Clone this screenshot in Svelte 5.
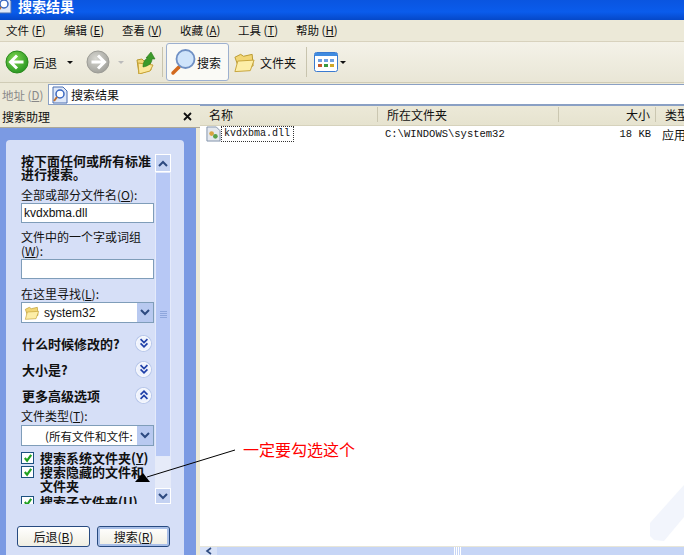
<script>
  const menus = [['文件','F'],['编辑','E'],['查看','V'],['收藏','A'],['工具','T'],['帮助','H']];
  const cjk = '"Noto Sans CJK SC", "DejaVu Sans", sans-serif';
</script>

{#snippet chevron(up)}
  <span class="chev">
    <svg width="12" height="12" viewBox="0 0 14 14" fill="none" stroke="#1f3fa8" stroke-width="2">
      {#if up}
        <path d="M3 6.500 7 2.500l4 4M3 11.500l4-4 4 4"/>
      {:else}
        <path d="M3 2.500 7 6.500l4-4M3 7.500l4 4 4-4"/>
      {/if}
    </svg>
  </span>
{/snippet}

{#snippet folder(w, h)}
  <svg width={w} height={h} viewBox="0 0 24 21">
    <path d="M2 5l6-3 3 2 9-2 1 12-14 5z" fill="#f2d675" stroke="#b99a30"/>
    <path d="M5 9l17-1-4 11-16 1z" fill="#fdeea8" stroke="#c6a338"/>
  </svg>
{/snippet}

{#snippet docIcon()}
  <svg width="16" height="18" viewBox="0 0 16 18">
    <path d="M1 1h10l4 4v12H1z" fill="#dfe8f8" stroke="#4a6fb0"/>
    <circle cx="8" cy="8" r="4" fill="#fff" stroke="#3a67c0" stroke-width="1.500"/>
    <path d="M5 11l-3 4" stroke="#c07030" stroke-width="2"/>
  </svg>
{/snippet}

{#snippet drop()}
  <span class="drop">
    <svg width="10" height="7" viewBox="0 0 10 7" fill="none" stroke="#2d4a80" stroke-width="2"><path d="M1 1l4 4 4-4"/></svg>
  </span>
{/snippet}

{#snippet check()}
  <span class="cb">
    <svg width="10" height="10" viewBox="0 0 11 11" fill="none" stroke="#21a121" stroke-width="2.400"><path d="M2 5.500 4.500 8.500 9 2"/></svg>
  </span>
{/snippet}

<div class="win" style:font-family={cjk}>
  <header class="title">
    <span class="title-ico">{@render docIcon()}</span>
    <span class="title-txt">搜索结果</span>
  </header>

  <nav class="menu">
    {#each menus as [t, k]}
      <span>{t} (<u>{k}</u>)</span>
    {/each}
  </nav>

  <div class="tools">
    <div class="tool back">
      <svg width="24" height="24" viewBox="0 0 24 24">
        <defs>
          <radialGradient id="g1" cx=".4" cy=".35" r=".75"><stop offset="0" stop-color="#7fd64f"/><stop offset="1" stop-color="#1f8f1e"/></radialGradient>
          <radialGradient id="g2" cx=".4" cy=".35" r=".75"><stop offset="0" stop-color="#d8d8d2"/><stop offset="1" stop-color="#9a9a94"/></radialGradient>
        </defs>
        <circle cx="12" cy="12" r="11" fill="url(#g1)" stroke="#2a8a1c"/>
        <path d="M12 5.500 5.500 12l6.500 6.500M6 12h12.500" fill="none" stroke="#fff" stroke-width="3"/>
      </svg>
      <span>后退</span>
      <i class="caret"></i>
    </div>
    <div class="tool fwd">
      <svg width="24" height="24" viewBox="0 0 24 24">
        <circle cx="12" cy="12" r="11" fill="url(#g2)" stroke="#9c9c96"/>
        <path d="M12 5.500 18.500 12 12 18.500M18 12H5.500" fill="none" stroke="#fff" stroke-width="3"/>
      </svg>
      <i class="caret off"></i>
    </div>
    <div class="tool up">
      <svg width="20" height="23" viewBox="0 0 20 23">
        <path d="M1 9l5-1 2 2 6-1 1 10-12 4z" fill="#f2d675" stroke="#b99a30"/>
        <path d="M2 12l15 2-3 6-11 3z" fill="#fce79a" stroke="#c6a338"/>
        <path d="M7 16c0-5 2-8 5-9h-2l5-6 4 7h-3c0 4-3 7-9 8z" fill="#3c9a2a" stroke="#2a7a1c" stroke-width=".6"/>
      </svg>
    </div>
    <span class="sep"></span>
    <div class="tool search">
      <svg width="27" height="28" viewBox="0 0 27 28">
        <path d="M3 25l6-6" stroke="#d2691e" stroke-width="3.500" stroke-linecap="round"/>
        <circle cx="15.500" cy="11" r="9" fill="#cfe4fb" stroke="#6f90c4" stroke-width="1.800"/>
      </svg>
      <span>搜索</span>
    </div>
    <div class="tool folders">
      {@render folder(23, 21)}
      <span>文件夹</span>
    </div>
    <span class="sep two"></span>
    <div class="tool views">
      <svg width="24" height="20" viewBox="0 0 24 20">
        <rect x=".5" y=".5" width="23" height="19" rx="2" fill="#fff" stroke="#3a7ad0"/>
        <rect x="1" y="1" width="22" height="3" fill="#3f8be0"/>
        <g fill="#c85a2a"><rect x="4" y="12" width="4" height="3"/></g>
        <g fill="#6fa0e0"><rect x="4" y="7" width="4" height="3"/><rect x="10" y="7" width="4" height="3"/><rect x="16" y="7" width="4" height="3"/></g>
        <g fill="#3a9a40"><rect x="10" y="12" width="4" height="3"/></g>
        <rect x="16" y="12" width="4" height="3" fill="#d0a828"/>
      </svg>
      <i class="caret"></i>
    </div>
  </div>

  <div class="addr">
    <span class="addr-label">地址 (<u>D</u>)</span>
    <div class="addr-box">{@render docIcon()}<span>搜索结果</span></div>
  </div>

  <div class="main">
    <aside class="side">
      <div class="side-head">
        <span>搜索助理</span>
        <svg width="9" height="9" viewBox="0 0 9 9" stroke="#111" stroke-width="1.800"><path d="M1 1l7 7M8 1 1 8"/></svg>
      </div>
      <div class="side-body">
        <div class="card">
          <div class="scroll-area">
            <div class="form">
              <p class="strong intro">按下面任何或所有标准<br />进行搜索。</p>
              <div class="lbl first">全部或部分文件名(<u>O</u>):</div>
              <div class="input latin">kvdxbma.dll</div>
              <div class="lbl second">文件中的一个字或词组<br />(<u>W</u>):</div>
              <div class="input"></div>
              <div class="lbl third">在这里寻找(<u>L</u>):</div>
              <div class="input select latin">
                <span class="sel-ico">{@render folder(16, 14)}</span>system32{@render drop()}
              </div>
              <div class="sect s1"><b>什么时候修改的?</b>{@render chevron(false)}</div>
              <div class="sect s2"><b>大小是?</b>{@render chevron(false)}</div>
              <div class="sect s3"><b>更多高级选项</b>{@render chevron(true)}</div>
              <div class="lbl fourth">文件类型(<u>T</u>):</div>
              <div class="input select types"><span class="type-txt">(所有文件和文件:</span>{@render drop()}</div>
              <div class="opt o1">{@render check()}<b>搜索系统文件夹(<u>Y</u>)</b></div>
              <div class="opt o2">{@render check()}<div class="two-line"><b>搜索隐藏的文件和</b><b>文件夹</b></div></div>
              <div class="opt o3">{@render check()}<b>搜索子文件夹(<u>U</u>)</b></div>
            </div>
            <div class="sbar">
              <span class="sb-btn"><svg width="10" height="7" viewBox="0 0 10 7" fill="none" stroke="#2d4a80" stroke-width="2"><path d="M1 6l4-4 4 4"/></svg></span>
              <span class="sb-thumb"><i></i></span>
              <span class="sb-track"></span>
              <span class="sb-btn low"><svg width="10" height="7" viewBox="0 0 10 7" fill="none" stroke="#2d4a80" stroke-width="2"><path d="M1 1l4 4 4-4"/></svg></span>
            </div>
          </div>
          <div class="btns">
            <span class="btn">后退(<u>B</u>)</span>
            <span class="btn def">搜索(<u>R</u>)</span>
          </div>
        </div>
      </div>
    </aside>

    <section class="list">
      <div class="cols">
        <span class="c1">名称</span>
        <span class="c2">所在文件夹</span>
        <span class="c3">大小</span>
        <span class="c4">类型</span>
      </div>
      <div class="row">
        <span class="c1 file">
          <svg width="15" height="16" viewBox="0 0 16 17">
            <path d="M1 1h10l4 4v11H1z" fill="#e4e8ee" stroke="#7d8fa8"/>
            <circle cx="6" cy="8" r="2.500" fill="#d9a441"/><circle cx="10" cy="11" r="2.500" fill="#58a24a"/>
          </svg>
          <span class="fname">kvdxbma.dll</span>
        </span>
        <span class="c2 mono">C:\WINDOWS\system32</span>
        <span class="c3 mono">18 KB</span>
        <span class="c4">应用</span>
      </div>
      <svg class="wm" width="36" height="60" viewBox="0 0 36 60">
        <path d="M36 0 2 38v13l4 4 10 1 20-24z" fill="#f2f5fc"/>
      </svg>
      <div class="hbar">
        <span class="hb-btn"><svg width="8" height="8" viewBox="0 0 8 8" fill="none" stroke="#2d4a80" stroke-width="1.600"><path d="M6 1 2 4l4 3"/></svg></span>
        <span class="hb-thumb"><i></i></span>
      </div>
    </section>
  </div>

  <svg class="arrow" width="105" height="36" viewBox="0 0 105 36">
    <path d="M102 3 14 30" stroke="#000" stroke-width="1"/>
    <path d="M2 35l8-9 7 9z" fill="#000"/>
  </svg>
  <span class="note">一定要勾选这个</span>
</div>

<style>
  :global(body) { margin: 0; background: #fff; }
  .win { position: relative; width: 684px; height: 555px; overflow: hidden; font-size: 12px; color: #111; background: #fff; display: flex; flex-direction: column; }
  u { text-decoration: underline; }
  .title { height: 20px; flex: none; display: flex; align-items: flex-start; color: #fff; font-weight: 700; font-size: 14px; background: linear-gradient(#0a55e0, #0a5cec 60%, #0548c8); }
  .title-ico { margin: -4px 0 0 -4px; display: flex; }
  .title-txt { margin-left: 6px; line-height: 13px; }
  .menu { height: 22px; flex: none; display: flex; align-items: center; gap: 12px; padding: 0 0 2px 6px; background: #ece9d8; border-bottom: 1px solid #d8d2bd; box-sizing: border-box; }
  .menu span { width: 46px; white-space: nowrap; font-size: 11.500px; }
  .tools { height: 41px; flex: none; display: flex; align-items: center; background: linear-gradient(#f4f2e8, #e9e6d6); border-bottom: 1px solid #d0ccb6; box-sizing: border-box; }
  .tool { display: flex; align-items: center; height: 100%; box-sizing: border-box; }
  .back { padding-left: 5px; width: 86px; flex: none; gap: 4px; }
  .back .caret { margin-left: 6px; }
  .caret { display: block; width: 0; height: 0; border: 3px solid transparent; border-top: 3px solid #111; border-bottom: 0; margin-left: 8px; }
  .caret.off { border-top-color: #bbb; }
  .fwd { width: 50px; flex: none; }
  .up { width: 26px; flex: none; }
  .sep { width: 1px; flex: none; height: 30px; background: #c8c4ae; margin-right: 3px; }
  .search { width: 63px; flex: none; height: 38px; padding-left: 3px; background: #fafaf6; border: 1px solid #9db0cf; border-radius: 3px; }
  .folders { width: 77px; flex: none; gap: 4px; padding-left: 4px; }
  .sep.two { margin-right: 7px; }
  .views .caret { margin-left: 2px; }
  .addr { height: 23px; flex: none; display: flex; align-items: center; background: #ece9d8; }
  .addr-label { width: 48px; flex: none; padding-left: 2px; color: #888; font-size: 11.500px; white-space: nowrap; box-sizing: border-box; }
  .addr-box { flex: 1; height: 21px; display: flex; align-items: center; gap: 3px; padding-left: 3px; background: #fff; border: 1px solid #8aa0c4; border-right: 0; box-sizing: border-box; }
  .main { flex: 1; display: flex; min-height: 0; }
  .side { width: 200px; flex: none; display: flex; flex-direction: column; background: #ece9d8; }
  .side-head { height: 22px; flex: none; display: flex; align-items: center; justify-content: space-between; padding: 0 8px 1px 2px; background: #ece9d8; border-bottom: 1px solid #aca899; box-sizing: border-box; }
  .side-body { flex: 1; margin-right: 4px; padding: 12px 12px 0 6px; background: #7b9ae3; display: flex; }
  .card { flex: 1; background: #d6dff7; border-radius: 4px 4px 0 0; display: flex; flex-direction: column; padding: 14px 0 0 15px; box-sizing: border-box; }
  .scroll-area { height: 350px; display: flex; overflow: hidden; flex: none; }
  .form { width: 134px; flex: none; font-size: 12px; white-space: nowrap; }
  .strong, .sect b, .opt b { font-weight: 700; }
  .intro { margin: 0; line-height: 13px; font-size: 13px; }
  .lbl { line-height: 15px; }
  .first { margin-top: 7px; }
  .second { margin-top: 7px; line-height: 14px; }
  .third { margin-top: 7px; }
  .fourth { margin-top: 4px; }
  .input { width: 133px; height: 20px; margin-top: 1px; background: #fff; border: 1px solid #7f9db9; box-sizing: border-box; display: flex; align-items: center; padding-left: 2px; }
  .latin { font-family: "Liberation Sans", sans-serif; font-size: 12px; }
  .select { height: 21px; }
  .sel-ico { display: flex; margin-right: 4px; }
  .drop { margin-left: auto; width: 16px; height: 100%; display: flex; align-items: center; justify-content: center; background: #b8c9f0; flex: none; }
  .type-txt { margin-left: 21px; font-size: 11.500px; }
  .types { margin-top: 2px; }
  .sect { display: flex; align-items: center; justify-content: space-between; padding-left: 1px; height: 18px; font-size: 13px; width: 129px; }
  .s1 { margin-top: 11px; }
  .s2 { margin-top: 8px; }
  .s3 { margin-top: 8px; }
  .chev { width: 15px; height: 15px; border-radius: 50%; background: #eef2fd; border: 1px solid #fff; box-shadow: 0 0 0 1px #b9c8ea; box-sizing: border-box; display: flex; align-items: center; justify-content: center; flex: none; }
  .opt { display: flex; gap: 6px; align-items: flex-start; font-size: 13px; line-height: 13px; }
  .two-line { display: flex; flex-direction: column; align-items: flex-start; line-height: 14px; }
  .o1 { margin-top: 5px; }
  .o2 { margin-top: 1px; }
  .o3 { margin-top: 2px; }
  .cb { width: 13px; height: 12px; margin-top: 1px; flex: none; background: #fff; border: 1px solid #1c5180; box-sizing: border-box; display: flex; align-items: center; justify-content: center; }
  .sbar { width: 16px; flex: none; display: flex; flex-direction: column; background: #e6ebf9; }
  .sb-btn { height: 18px; flex: none; display: flex; align-items: center; justify-content: center; background: #c4d2f2; border: 1px solid #fff; box-sizing: border-box; }
  .sb-btn.low { height: 16px; }
  .sb-thumb { height: 285px; flex: none; background: #b7c8f5; border: 1px solid #e4eafa; box-sizing: border-box; display: flex; align-items: center; justify-content: center; }
  .sb-thumb i { display: block; width: 7px; height: 7px; background: repeating-linear-gradient(#8ea6dc 0 1px, transparent 1px 2px); }
  .sb-track { height: 31px; flex: none; }
  .btns { display: flex; gap: 7px; margin: 22px 0 0 -4px; }
  .btn { width: 73px; height: 21px; box-sizing: border-box; display: flex; align-items: center; justify-content: center; border: 1px solid #274a80; border-radius: 3px; background: linear-gradient(#fff, #f0eee2); font-size: 12px; }
  .btn.def { box-shadow: inset 0 0 0 2px #a9bfe8; }
  .list { flex: 1; min-width: 0; position: relative; display: flex; flex-direction: column; }
  .cols { height: 21px; flex: none; display: flex; align-items: center; padding-bottom: 2px; background: linear-gradient(#ece9d8, #e6e3cf); border-top: 1px solid #8aa0c4; border-bottom: 1px solid #d6d2bc; font-size: 12px; box-sizing: border-box; margin-top: -1px; }
  .cols span { border-right: 1px solid #cbc7b1; height: 15px; line-height: 15px; display: block; box-sizing: border-box; }
  .c1 { width: 178px; padding-left: 9px; box-sizing: border-box; flex: none; }
  .c2 { width: 181px; padding-left: 9px; box-sizing: border-box; flex: none; }
  .c3 { width: 97px; box-sizing: border-box; flex: none; text-align: right; padding-right: 5px; }
  .c4 { flex: 1; padding-left: 9px; white-space: nowrap; border-right: 0 !important; }
  .row { height: 16px; display: flex; align-items: center; flex: none; font-size: 12px; }
  .row .c1 { padding-left: 6px; display: flex; align-items: center; }
  .row .c2 { padding-left: 7px; }
  .row .c3 { padding-right: 5px; }
  .row .c4 { padding-left: 6px; }
  .fname { font-family: "Liberation Mono", monospace; font-size: 10px; border: 1px dotted #333; padding: 0 3px 0 2px; line-height: 14px; white-space: nowrap; }
  .mono { font-family: "Liberation Mono", monospace; font-size: 10.500px; white-space: nowrap; }
  .wm { position: absolute; right: 0; bottom: 10px; }
  .hbar { margin-top: auto; height: 9px; flex: none; display: flex; background: #c6d5f6; border-top: 1px solid #e8e6d8; box-sizing: border-box; position: relative; }
  .hb-btn { width: 17px; background: #d8e2f8; display: flex; align-items: flex-start; justify-content: center; overflow: hidden; margin-right: 1px; }
  .hb-thumb { flex: 1; display: flex; justify-content: center; padding-left: 12px; }
  .hb-thumb i { display: block; width: 7px; height: 100%; background: repeating-linear-gradient(90deg, #fff 0 1px, transparent 1px 2px); }
  .arrow { position: absolute; left: 133px; top: 447px; }
  .note { position: absolute; left: 243px; top: 439px; color: #f00; font-size: 16px; line-height: 20px; white-space: nowrap; }
</style>
